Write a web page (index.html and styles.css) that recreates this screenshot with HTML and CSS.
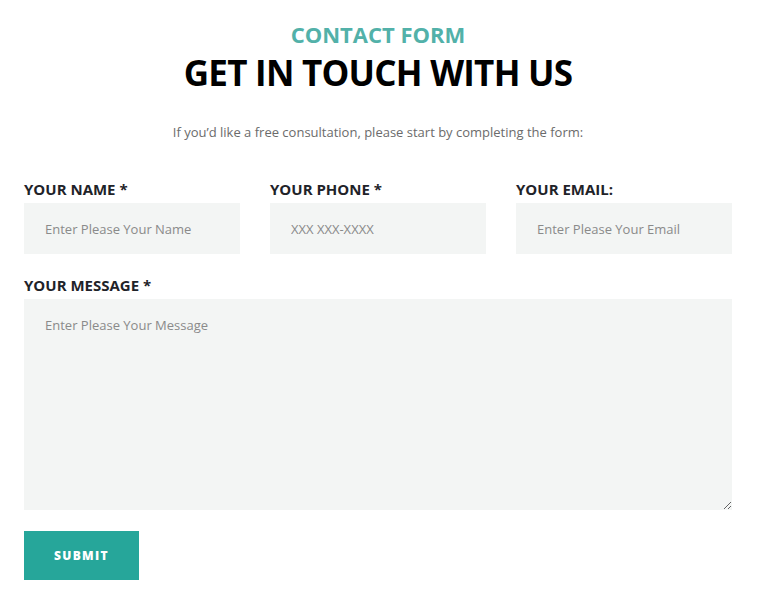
FILE: index.html
```html
<!DOCTYPE html>
<html>
<head>
<meta charset="utf-8">
<link rel="stylesheet" href="styles.css">
</head>
<body>
<div class="wrap">
  <div class="head">
    <div class="kicker">CONTACT FORM</div>
    <h1 class="title">GET IN TOUCH WITH US</h1>
    <p class="lead">If you’d like a free consultation, please start by completing the form:</p>
  </div>
  <form class="form">
    <div class="row">
      <label class="field">
        <span class="label">YOUR NAME *</span>
        <input class="input" type="text" placeholder="Enter Please Your Name">
      </label>
      <label class="field">
        <span class="label">YOUR PHONE *</span>
        <input class="input" type="text" placeholder="XXX XXX-XXXX">
      </label>
      <label class="field">
        <span class="label">YOUR EMAIL:</span>
        <input class="input" type="text" placeholder="Enter Please Your Email">
      </label>
    </div>
    <label class="field">
      <span class="label">YOUR MESSAGE *</span>
      <textarea class="input area" placeholder="Enter Please Your Message"></textarea>
    </label>
    <div><button class="btn" type="button">SUBMIT</button></div>
  </form>
</div>
</body>
</html>
```
FILE: styles.css
```css
* { box-sizing: border-box; }
body {
  margin: 0;
  background: #fff;
  font-family: "Open Sans", sans-serif;
}
.wrap {
  width: 708px;
  margin-left: 24px;
  padding-top: 18px;
}
.head { text-align: center; }
.kicker {
  font-family: "Open Sans", sans-serif;
  font-weight: 700;
  font-size: 22px;
  line-height: 32px;
  color: #52b1a9;
}
.title {
  margin: 0;
  font-family: "Open Sans", sans-serif;
  font-weight: 700;
  font-size: 35px;
  line-height: 46px;
  letter-spacing: -0.75px;
  color: #000;
}
.lead {
  margin: 26px 0 0;
  font-size: 13px;
  line-height: 20px;
  color: #6b6b6b;
}
.form {
  margin-top: 37px;
  display: flex;
  flex-direction: column;
  gap: 21px;
}
.row {
  display: flex;
  gap: 30px;
}
.row .field { flex: 1; }
.field {
  display: flex;
  flex-direction: column;
}
.label {
  font-weight: 700;
  font-size: 15px;
  line-height: 20px;
  color: #1f2329;
  margin-bottom: 4px;
}
.input {
  border: 0;
  outline: 0;
  background: #f3f5f4;
  height: 51px;
  padding: 0 21px;
  font-family: "Open Sans", sans-serif;
  font-size: 13px;
  color: #333;
  width: 100%;
}
.input::placeholder { color: #8a8a8a; }
.area {
  height: 211px;
  padding-top: 17px;
  resize: vertical;
}
.btn {
  border: 0;
  background: #26a69a;
  color: #fff;
  width: 115px;
  height: 49px;
  font-family: "Open Sans", sans-serif;
  font-weight: 800;
  font-size: 12px;
  letter-spacing: 1.3px;
}
```
